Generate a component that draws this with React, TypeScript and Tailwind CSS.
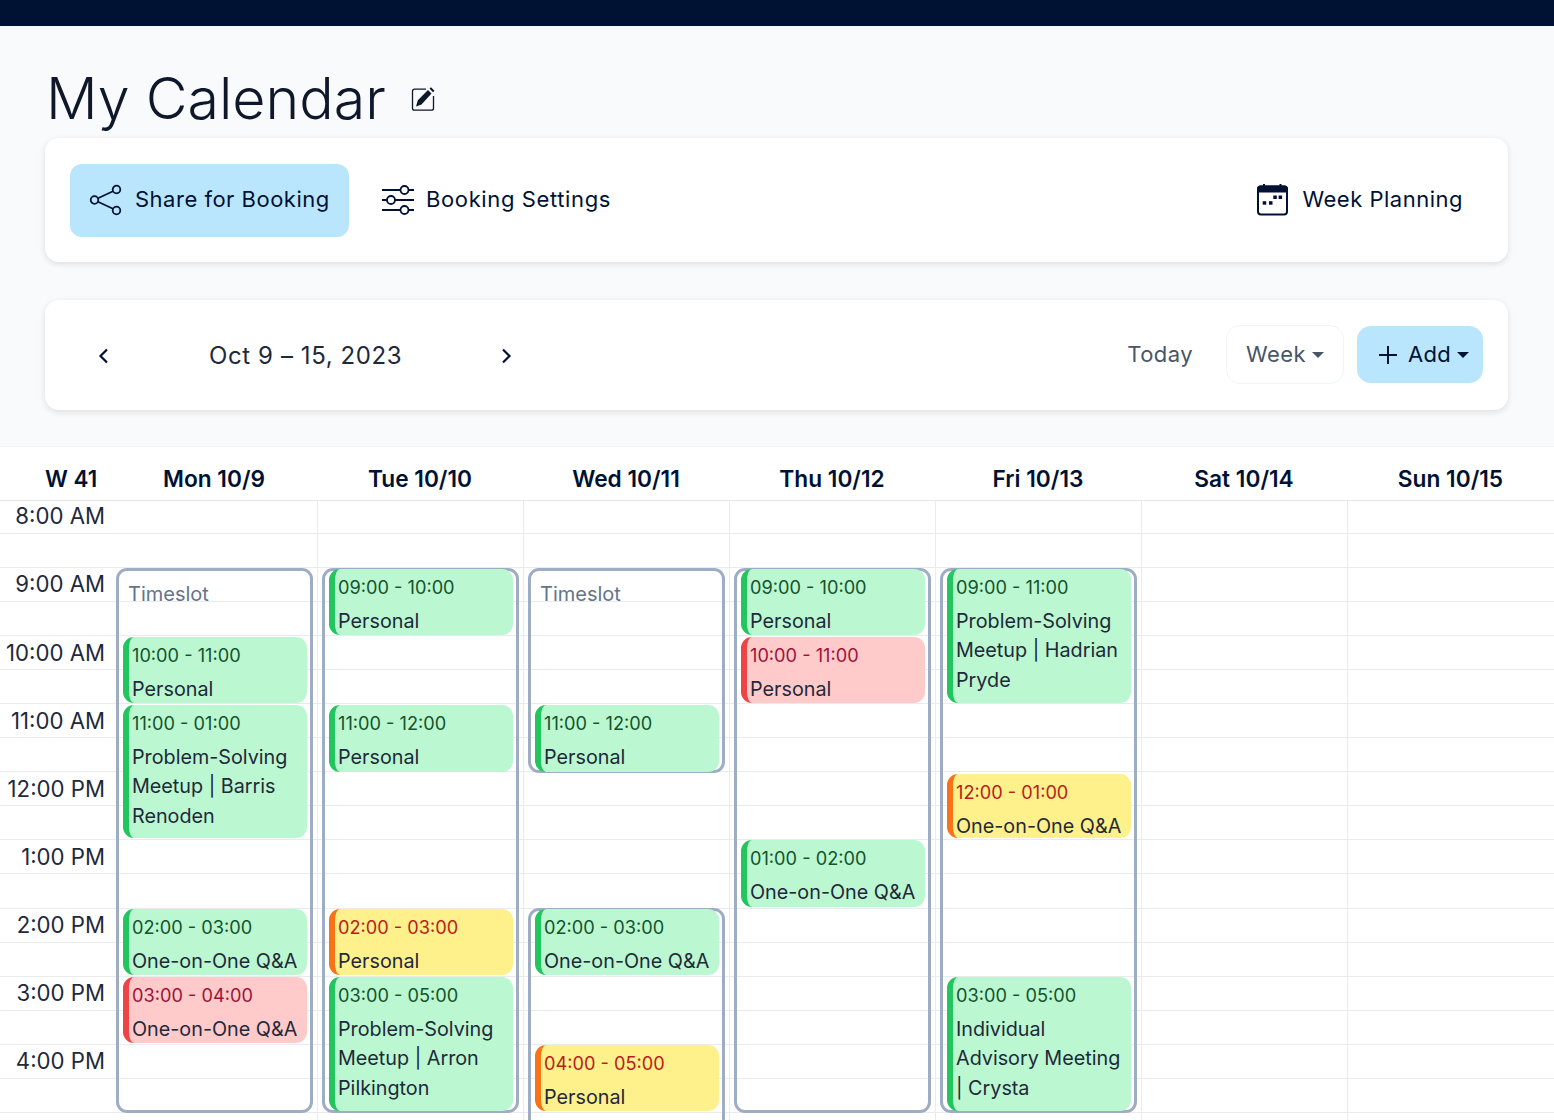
import React from "react";

const HOUR = 68.12;
// pixel offset of each whole hour inside the time grid, as the picture rounds them
const hourTop: Record<number, number> = { 9: 68, 10: 136, 11: 204, 12: 273, 13: 339, 14: 408, 15: 476, 16: 544, 17: 612, 18: 680 };
type Tone = "green" | "red" | "yellow";
type Ev = { start: number; len: number; time: string; title: string; tone: Tone };
type Slot = { start: number; len: number; label?: boolean; trim?: number };
type Day = { name: string; slots: Slot[]; events: Ev[] };

const toneClass: Record<Tone, string> = {
  green: "bg-[#bbf7d0] border-[#22c55e]",
  red: "bg-[#fecaca] border-[#ef4444]",
  yellow: "bg-[#fef08a] border-[#f97316]",
};
const timeClass: Record<Tone, string> = {
  green: "text-[#14532d]",
  red: "text-[#9f1239]",
  yellow: "text-[#b91c1c]",
};

const days: Day[] = [
  {
    name: "Mon 10/9",
    slots: [{ start: 9, len: 8, label: true }],
    events: [
      { start: 10, len: 1, time: "10:00 - 11:00", title: "Personal", tone: "green" },
      { start: 11, len: 2, time: "11:00 - 01:00", title: "Problem-Solving Meetup | Barris Renoden", tone: "green" },
      { start: 14, len: 1, time: "02:00 - 03:00", title: "One-on-One Q&A", tone: "green" },
      { start: 15, len: 1, time: "03:00 - 04:00", title: "One-on-One Q&A", tone: "red" },
    ],
  },
  {
    name: "Tue 10/10",
    slots: [{ start: 9, len: 8 }],
    events: [
      { start: 9, len: 1, time: "09:00 - 10:00", title: "Personal", tone: "green" },
      { start: 11, len: 1, time: "11:00 - 12:00", title: "Personal", tone: "green" },
      { start: 14, len: 1, time: "02:00 - 03:00", title: "Personal", tone: "yellow" },
      { start: 15, len: 2, time: "03:00 - 05:00", title: "Problem-Solving Meetup | Arron Pilkington", tone: "green" },
    ],
  },
  {
    name: "Wed 10/11",
    slots: [
      { start: 9, len: 3, label: true, trim: 1 },
      { start: 14, len: 4 },
    ],
    events: [
      { start: 11, len: 1, time: "11:00 - 12:00", title: "Personal", tone: "green" },
      { start: 14, len: 1, time: "02:00 - 03:00", title: "One-on-One Q&A", tone: "green" },
      { start: 16, len: 1, time: "04:00 - 05:00", title: "Personal", tone: "yellow" },
    ],
  },
  {
    name: "Thu 10/12",
    slots: [{ start: 9, len: 8 }],
    events: [
      { start: 9, len: 1, time: "09:00 - 10:00", title: "Personal", tone: "green" },
      { start: 10, len: 1, time: "10:00 - 11:00", title: "Personal", tone: "red" },
      { start: 13, len: 1, time: "01:00 - 02:00", title: "One-on-One Q&A", tone: "green" },
    ],
  },
  {
    name: "Fri 10/13",
    slots: [{ start: 9, len: 8 }],
    events: [
      { start: 9, len: 2, time: "09:00 - 11:00", title: "Problem-Solving Meetup | Hadrian Pryde", tone: "green" },
      { start: 12, len: 1, time: "12:00 - 01:00", title: "One-on-One Q&A", tone: "yellow" },
      { start: 15, len: 2, time: "03:00 - 05:00", title: "Individual Advisory Meeting | Crysta", tone: "green" },
    ],
  },
  { name: "Sat 10/14", slots: [], events: [] },
  { name: "Sun 10/15", slots: [], events: [] },
];

const hours = ["8:00 AM", "9:00 AM", "10:00 AM", "11:00 AM", "12:00 PM", "1:00 PM", "2:00 PM", "3:00 PM", "4:00 PM", "5:00 PM"];
const rows = Array.from({ length: 19 }, (_, i) => i);

function Rows() {
  return (
    <>
      {rows.map((i) => (
        <div key={i} className={i === 0 ? "h-[33px] border-b border-[#e9ebef]" : "h-[34.06px] border-b border-[#e9ebef]"} />
      ))}
    </>
  );
}

function ShareIcon() {
  return (
    <svg width="34" height="34" viewBox="0 0 34 34" fill="none" stroke="#001233" strokeWidth="1.8">
      <circle cx="5.5" cy="17" r="3.8" />
      <circle cx="27.5" cy="6.5" r="3.8" />
      <circle cx="27.5" cy="27.5" r="3.8" />
      <path d="M9 15.2 24 8.200M9 18.800l15 7" />
    </svg>
  );
}

function SlidersIcon() {
  return (
    <svg width="34" height="32" viewBox="0 0 34 32" fill="none" stroke="#001233" strokeWidth="1.8">
      <path d="M1 6h18M28 6h5M1 16h5M14 16h19M1 26h18M28 26h5" />
      <circle cx="23.5" cy="6" r="4" />
      <circle cx="10" cy="16" r="4" />
      <circle cx="23.5" cy="26" r="4" />
    </svg>
  );
}

function PlanIcon() {
  return (
    <svg width="31" height="32" viewBox="0 0 31 32" fill="none">
      <rect x="1" y="2.5" width="29" height="28" rx="3" stroke="#001233" strokeWidth="2" />
      <path d="M0 8.500V5a3.500 3.500 0 0 1 3.500-3.500H6V0h2v1.500h14.500V0h2v1.500H27.500A3.500 3.500 0 0 1 31 5v3.500z" fill="#001233" />
      <rect x="5.700" y="17.200" width="3.500" height="3.500" fill="#001233" />
      <rect x="12" y="17.200" width="3.500" height="3.500" fill="#001233" />
      <rect x="16.300" y="11.500" width="3.500" height="3.500" fill="#001233" />
      <rect x="21.600" y="11.500" width="3.500" height="3.500" fill="#001233" />
    </svg>
  );
}

function EditIcon() {
  return (
    <svg width="24" height="24" viewBox="0 0 24 24" fill="none">
      <path d="M15 2.200H3.500a2 2 0 0 0-2 2v17a2 2 0 0 0 2 2h17a2 2 0 0 0 2-2V9" stroke="#0f172a" strokeWidth="1.300" />
      <path d="M5 19.500l1.800-6.300L17 3l3.500 3.500L10.500 17.500z M18.500 1.600 20 0.300l3.500 3.400-1.500 1.500z" fill="#0f172a" />
    </svg>
  );
}

function Caret({ color }: { color: string }) {
  return <span className={`inline-block w-0 h-0 border-x-[6px] border-x-transparent border-t-[6px] ${color}`} />;
}

function EventCard({ ev, first }: { ev: Ev; first: boolean }) {
  const top = hourTop[ev.start];
  return (
    <div
      className={`absolute w-[184px] rounded-[11px] border-l-[6px] pl-[3px] pr-1 pt-[4px] overflow-hidden ${first ? "left-[12px]" : "left-[11px]"} ${toneClass[ev.tone]}`}
      style={{ top, height: hourTop[ev.start + ev.len] - top - 2 }}
    >
      <div className={`text-[18.2px] leading-[28px] mb-[6px] ${timeClass[ev.tone]}`}>{ev.time}</div>
      <div className="text-[19.75px] leading-[29.3px] text-[#1e293b]">{ev.title}</div>
    </div>
  );
}

export default function App() {
  return (
    <div className="h-[1120px] overflow-hidden bg-white font-['Inter',sans-serif] text-[#001233]">
      <div className="h-[26px] bg-[#001233]" />
      <div className="h-[421px] bg-[#f9fafb] pl-[45px] pr-[46px] border-b border-[#f1f3f5]">
        <div className="h-[112px] flex items-center pt-[32px] pl-[1px] gap-[25px]">
          <h1 className="text-[57.3px] leading-[72px] font-light text-[#0f172a]">My Calendar</h1>
          <span className="mt-[1px]"><EditIcon /></span>
        </div>
        <div className="h-[124px] bg-white rounded-[14px] shadow-[0_2px_6px_rgba(15,23,42,0.12)] flex items-center pl-[25px] pr-[45px]">
          <button className="h-[73px] w-[279px] bg-[#bae6fd] rounded-[12px] flex items-center pl-[19px] gap-[12px] text-[22px] tracking-[0.5px]">
            <ShareIcon />
            <span className="-mt-[2px]">Share for Booking</span>
          </button>
          <button className="flex items-center ml-[32px] gap-[11px] text-[22px] tracking-[0.62px]">
            <SlidersIcon />
            <span className="-mt-[2px]">Booking Settings</span>
          </button>
          <button className="flex items-center ml-auto gap-[14px] text-[22px] tracking-[0.5px]">
            <PlanIcon />
            <span className="-mt-[2px]">Week Planning</span>
          </button>
        </div>
        <div className="mt-[38px] h-[110px] bg-white rounded-[14px] shadow-[0_2px_6px_rgba(15,23,42,0.12)] flex items-center pl-[50px] pr-[25px]">
          <svg width="16" height="18" viewBox="0 0 16 18" fill="none" stroke="#001233" strokeWidth="2.2" className="ml-0 mt-[2px]">
            <path d="M12 2.500 5.500 9l6.500 6.500" />
          </svg>
          <span className="ml-[98px] w-[290px] text-[24px] tracking-[0.6px] text-[#1e293b] mt-[1px]">Oct 9 – 15, 2023</span>
          <svg width="16" height="18" viewBox="0 0 16 18" fill="none" stroke="#001233" strokeWidth="2.2" className="mt-[2px]">
            <path d="M4 2.500 10.500 9 4 15.500" />
          </svg>
          <span className="ml-auto text-[22px] tracking-[0.45px] text-[#475569] -mt-[2px]">Today</span>
          <button className="ml-[33px] -mt-px h-[59px] w-[118px] rounded-[14px] bg-white border border-[#f1f5f9] flex items-center justify-center gap-[6px] text-[22px] tracking-[0.4px] text-[#475569]">
            Week
            <Caret color="border-t-[#475569]" />
          </button>
          <button className="ml-[13px] -mt-px h-[57px] w-[126px] rounded-[14px] bg-[#bae6fd] flex items-center pl-[21px] gap-[9px] text-[22px] tracking-[0.3px]">
            <svg width="20" height="20" viewBox="0 0 20 20" fill="none" stroke="#001233" strokeWidth="2" className="mr-[1px]">
              <path d="M10 1v18M1 10h18" />
            </svg>
            Add
            <Caret color="border-t-[#001233] -ml-[3px]" />
          </button>
        </div>
      </div>

      <div className="grid grid-cols-[111px_repeat(6,206px)_1fr] h-[54px] border-b border-[#e5e7eb] text-[22.7px] font-semibold items-center pt-[11px]">
        <div className="pl-[45px] whitespace-nowrap text-[22.4px]">W 41</div>
        {days.map((d) => (
          <div key={d.name} className="text-center">{d.name}</div>
        ))}
      </div>

      <div className="grid grid-cols-[111px_repeat(6,206px)_1fr]">
        <div className="relative">
          <Rows />
          {hours.map((h, i) => (
            <div
              key={h}
              className="absolute right-[6px] text-[22.2px] leading-[32px] text-[#1e293b] whitespace-nowrap"
              style={{ top: i * HOUR - 0.7 }}
            >
              {h}
            </div>
          ))}
        </div>
        {days.map((d, idx) => (
          <div key={d.name} className={idx === 0 ? "relative" : "relative border-l border-[#e9ebef]"}>
            <Rows />
            {d.slots.map((s) => (
              <div
                key={s.start}
                className={`absolute w-[197px] rounded-[11px] border-[3px] border-[#9fadc4] pl-[9px] pt-[8px] text-[20px] leading-[30px] text-[#64748b] ${idx === 0 ? "left-[5px]" : "left-[4px]"}`}
                style={{ top: hourTop[s.start] - 1, height: hourTop[s.start + s.len] - hourTop[s.start] + 1 - (s.trim ?? 0) }}
              >
                {s.label ? "Timeslot" : null}
              </div>
            ))}
            {d.events.map((e) => (
              <EventCard key={e.start} ev={e} first={idx === 0} />
            ))}
          </div>
        ))}
      </div>
    </div>
  );
}
